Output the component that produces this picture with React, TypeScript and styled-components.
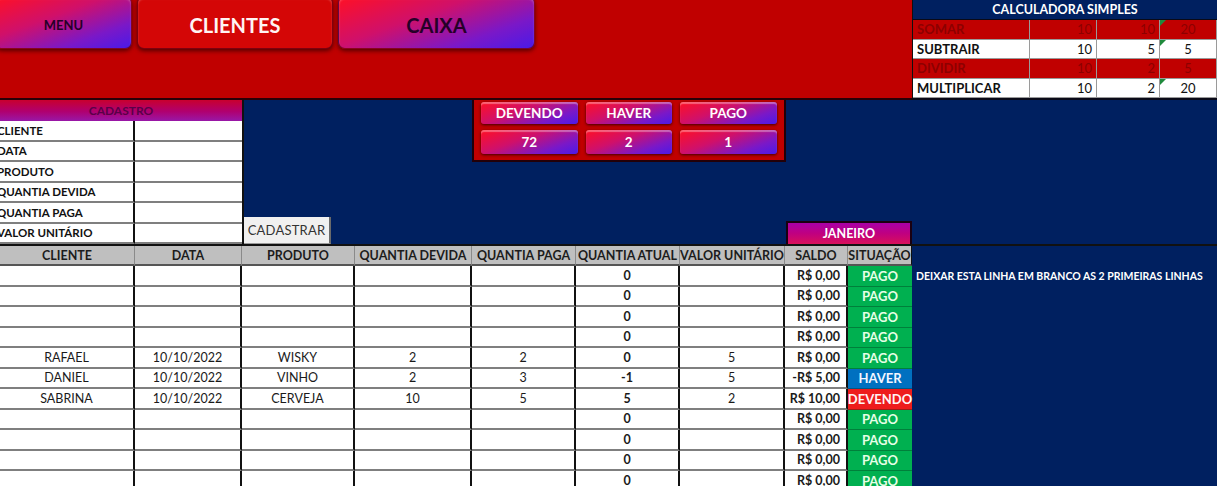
import React from "react";
import styled, { createGlobalStyle } from "styled-components";

const NAVY = "#002060";
const RED = "#c00000";
const GLOSS = "linear-gradient(160deg, #ff1024 0%, #d0106a 40%, #7a18c8 75%, #4a1ae8 100%)";

const GlobalStyle = createGlobalStyle`
  html, body {
    margin: 0;
    padding: 0;
    background: ${NAVY};
  }
  body {
    font-family: Lato, "Open Sans", "Liberation Sans", sans-serif;
  }
`;

const Sheet = styled.div`
  width: 1217px;
  height: 486px;
  overflow: hidden;
  background: ${NAVY};
  display: flex;
  flex-direction: column;
`;

/* ---------- top band ---------- */

const TopArea = styled.div`
  display: flex;
  height: 100px;
  flex-shrink: 0;
`;

const MenuBand = styled.div`
  width: 912px;
  box-sizing: border-box;
  background: ${RED};
  border-bottom: 2px solid #2a0008;
  display: flex;
  align-items: flex-start;
  gap: 5px;
`;

const NavButton = styled.div<{ $w: number; $active?: boolean; $size: number }>`
  width: ${(p) => p.$w}px;
  height: 53px;
  margin-top: -4px;
  box-sizing: border-box;
  border-radius: 7px;
  background: ${(p) => (p.$active ? "#d40606" : GLOSS)};
  border: 1px solid rgba(90, 0, 20, 0.7);
  box-shadow: inset 0 2px 2px rgba(255, 255, 255, 0.25), 0 2px 4px rgba(40, 0, 0, 0.7);
  display: flex;
  align-items: center;
  justify-content: center;
  padding-top: 4px;
  font-weight: 700;
  font-size: ${(p) => p.$size}px;
  color: ${(p) => (p.$active ? "#fff4f4" : "#260028")};
  &:first-child {
    margin-left: -5px;
  }
`;

const Calculator = styled.div`
  flex: 1;
  border-left: 1px solid #101010;
  border-bottom: 2px solid #0a0a18;
  box-sizing: border-box;
  display: flex;
  flex-direction: column;
`;

const CalcTitle = styled.div`
  height: 20px;
  background: ${NAVY};
  color: #ffffff;
  font-weight: 700;
  font-size: 12.5px;
  display: flex;
  align-items: center;
  justify-content: center;
  border-bottom: 1px solid #0a0a18;
  box-sizing: border-box;
`;

const CalcRow = styled.div<{ $tone: "red" | "white" }>`
  height: 19.5px;
  display: grid;
  grid-template-columns: 117px 67px 63px 1fr;
  background: ${(p) => (p.$tone === "red" ? RED : "#ffffff")};
  color: ${(p) => (p.$tone === "red" ? "#8c0000" : "#111111")};
  font-size: 13px;
`;

const CalcCell = styled.div<{ $align?: "left" | "right" | "center"; $bold?: boolean; $flag?: boolean }>`
  position: relative;
  display: flex;
  align-items: center;
  justify-content: ${(p) =>
    p.$align === "right" ? "flex-end" : p.$align === "center" ? "center" : "flex-start"};
  padding: 0 4px;
  font-weight: ${(p) => (p.$bold ? 700 : 400)};
  border-right: 1px solid #9a9a9a;
  border-bottom: 1px solid #9a9a9a;
  box-sizing: border-box;
  &::before {
    content: "";
    display: ${(p) => (p.$flag ? "block" : "none")};
    position: absolute;
    left: 0;
    top: 0;
    border-top: 6px solid #1f8a3c;
    border-right: 6px solid transparent;
  }
`;

/* ---------- middle strip ---------- */

const Middle = styled.div`
  display: flex;
  height: 144px;
  flex-shrink: 0;
`;

const Cadastro = styled.div`
  width: 242px;
  display: grid;
  grid-template-columns: 135px 107px;
  grid-template-rows: 21px repeat(6, 20.5px);
  border-right: 2px solid #111;
  box-sizing: content-box;
`;

const CadastroTitle = styled.div`
  grid-column: 1 / 3;
  background: linear-gradient(180deg, #c8002e 0%, #b00070 55%, #9818a8 100%);
  color: #5a0048;
  font-weight: 700;
  font-size: 12px;
  display: flex;
  align-items: center;
  justify-content: center;
`;

const FormLabel = styled.div`
  background: #ffffff;
  color: #111;
  font-weight: 700;
  font-size: 11.5px;
  display: flex;
  align-items: center;
  margin-left: -3px;
  border-right: 2px solid #111;
  border-bottom: 2px solid #7f7f7f;
  box-sizing: border-box;
  white-space: nowrap;
`;

const FormValue = styled.div`
  background: #ffffff;
  border-bottom: 2px solid #7f7f7f;
  box-sizing: border-box;
`;

const ButtonSlot = styled.div`
  width: 229px;
  display: flex;
  align-items: flex-end;
`;

const SaveButton = styled.div`
  width: 87px;
  height: 27px;
  box-sizing: border-box;
  background: #f0f0f0;
  border-right: 2px solid #6a6a6a;
  border-bottom: 1px solid #9a9a9a;
  color: #333;
  font-size: 13px;
  display: flex;
  align-items: center;
  justify-content: center;
  letter-spacing: 0.2px;
`;

const StatusBox = styled.div`
  width: 314px;
  height: 62px;
  box-sizing: border-box;
  background: ${RED};
  border: 2px solid #220008;
  border-top: none;
  display: grid;
  grid-template-columns: 97px 86px 97px;
  grid-template-rows: 22px 24px;
  column-gap: 8px;
  row-gap: 6px;
  padding: 2px 7px 0 7px;
`;

const StatusButton = styled.div`
  border-radius: 3px;
  background: ${GLOSS};
  box-shadow: inset 0 2px 1px rgba(255, 255, 255, 0.35), 0 1px 3px rgba(30, 0, 0, 0.8);
  color: #ffffff;
  font-weight: 700;
  font-size: 13.5px;
  display: flex;
  align-items: center;
  justify-content: center;
`;

const MonthSlot = styled.div`
  width: 127px;
  margin-left: auto;
  margin-right: 305px;
  display: flex;
  align-items: flex-end;
`;

const MonthTitle = styled.div`
  width: 100%;
  height: 23px;
  box-sizing: border-box;
  border: 2px solid #1a0010;
  border-bottom: none;
  background: linear-gradient(180deg, #a800a8 0%, #c00080 50%, #d8105a 100%);
  color: #ffffff;
  font-weight: 700;
  font-size: 12.5px;
  display: flex;
  align-items: center;
  justify-content: center;
`;

/* ---------- ledger ---------- */

const Ledger = styled.div`
  display: grid;
  grid-template-columns: 135px 107px 113px 117px 104px 104px 105px 63px 64px 1fr;
  grid-template-rows: 20px;
  grid-auto-rows: 20.5px;
  border-top: 2px solid #111;
`;

const HeadCell = styled.div<{ $last?: boolean }>`
  background: #bfbfbf;
  color: #1c1c1c;
  font-weight: 700;
  font-size: 12.5px;
  display: flex;
  align-items: center;
  justify-content: center;
  white-space: nowrap;
  overflow: hidden;
  border-right: 1px solid ${(p) => (p.$last ? "#111" : "#8a8a8a")};
  border-bottom: 2px solid #555;
  box-sizing: border-box;
`;

const Cell = styled.div<{ $bold?: boolean; $align?: "center" | "right" }>`
  background: #ffffff;
  color: #1a1a1a;
  font-size: 12.5px;
  font-weight: ${(p) => (p.$bold ? 700 : 400)};
  display: flex;
  align-items: center;
  justify-content: ${(p) => (p.$align === "right" ? "flex-end" : "center")};
  padding-right: ${(p) => (p.$align === "right" ? "6px" : "0")};
  border-right: 2px solid #111;
  border-bottom: 2px solid #7f7f7f;
  box-sizing: border-box;
  white-space: nowrap;
`;

type Status = "PAGO" | "HAVER" | "DEVENDO";

const statusColors: Record<Status, { bg: string; fg: string }> = {
  PAGO: { bg: "#00b050", fg: "#e6ffe6" },
  HAVER: { bg: "#0070c0", fg: "#f2f6ff" },
  DEVENDO: { bg: "#ee1c1c", fg: "#fff4f4" },
};

const StatusCell = styled.div<{ $status: Status }>`
  background: ${(p) => statusColors[p.$status].bg};
  color: ${(p) => statusColors[p.$status].fg};
  font-weight: 700;
  font-size: 13px;
  display: flex;
  align-items: center;
  justify-content: center;
  border-bottom: 1px solid rgba(0, 40, 20, 0.35);
  box-sizing: border-box;
  white-space: nowrap;
`;

const NoteCell = styled.div`
  color: #ffffff;
  font-weight: 700;
  font-size: 10.5px;
  display: flex;
  align-items: center;
  padding-left: 4px;
  white-space: nowrap;
`;

type Entry = {
  cliente: string;
  data: string;
  produto: string;
  devida: string;
  paga: string;
  atual: string;
  unitario: string;
  saldo: string;
  situacao: Status;
};

const blank = (saldo = "R$ 0,00"): Entry => ({
  cliente: "",
  data: "",
  produto: "",
  devida: "",
  paga: "",
  atual: "0",
  unitario: "",
  saldo,
  situacao: "PAGO",
});

const entries: Entry[] = [
  blank(),
  blank(),
  blank(),
  blank(),
  { cliente: "RAFAEL", data: "10/10/2022", produto: "WISKY", devida: "2", paga: "2", atual: "0", unitario: "5", saldo: "R$ 0,00", situacao: "PAGO" },
  { cliente: "DANIEL", data: "10/10/2022", produto: "VINHO", devida: "2", paga: "3", atual: "-1", unitario: "5", saldo: "-R$ 5,00", situacao: "HAVER" },
  { cliente: "SABRINA", data: "10/10/2022", produto: "CERVEJA", devida: "10", paga: "5", atual: "5", unitario: "2", saldo: "R$ 10,00", situacao: "DEVENDO" },
  blank(),
  blank(),
  blank(),
  blank(),
];

const headers = [
  "CLIENTE",
  "DATA",
  "PRODUTO",
  "QUANTIA DEVIDA",
  "QUANTIA PAGA",
  "QUANTIA ATUAL",
  "VALOR UNITÁRIO",
  "SALDO",
  "SITUAÇÃO",
];

const formFields = ["CLIENTE", "DATA", "PRODUTO", "QUANTIA DEVIDA", "QUANTIA PAGA", "VALOR UNITÁRIO"];

const calcRows = [
  { op: "SOMAR", a: "10", b: "10", r: "20", tone: "red" as const, flag: true },
  { op: "SUBTRAIR", a: "10", b: "5", r: "5", tone: "white" as const, flag: true },
  { op: "DIVIDIR", a: "10", b: "2", r: "5", tone: "red" as const, flag: false },
  { op: "MULTIPLICAR", a: "10", b: "2", r: "20", tone: "white" as const, flag: true },
];

export default function App() {
  return (
    <>
      <GlobalStyle />
      <Sheet>
        <TopArea>
          <MenuBand>
            <NavButton $w={137} $size={13}>MENU</NavButton>
            <NavButton $w={196} $size={20} $active>CLIENTES</NavButton>
            <NavButton $w={197} $size={20}>CAIXA</NavButton>
          </MenuBand>
          <Calculator>
            <CalcTitle>CALCULADORA SIMPLES</CalcTitle>
            {calcRows.map((row) => (
              <CalcRow key={row.op} $tone={row.tone}>
                <CalcCell $bold>{row.op}</CalcCell>
                <CalcCell $align="right">{row.a}</CalcCell>
                <CalcCell $align="right">{row.b}</CalcCell>
                <CalcCell $align="center" $flag={row.flag}>{row.r}</CalcCell>
              </CalcRow>
            ))}
          </Calculator>
        </TopArea>

        <Middle>
          <Cadastro>
            <CadastroTitle>CADASTRO</CadastroTitle>
            {formFields.map((f) => (
              <React.Fragment key={f}>
                <FormLabel>{f}</FormLabel>
                <FormValue />
              </React.Fragment>
            ))}
          </Cadastro>
          <ButtonSlot>
            <SaveButton>CADASTRAR</SaveButton>
          </ButtonSlot>
          <StatusBox>
            <StatusButton>DEVENDO</StatusButton>
            <StatusButton>HAVER</StatusButton>
            <StatusButton>PAGO</StatusButton>
            <StatusButton>72</StatusButton>
            <StatusButton>2</StatusButton>
            <StatusButton>1</StatusButton>
          </StatusBox>
          <MonthSlot>
            <MonthTitle>JANEIRO</MonthTitle>
          </MonthSlot>
        </Middle>

        <Ledger>
          {headers.map((h, i) => (
            <HeadCell key={h} $last={i === headers.length - 1}>
              {h}
            </HeadCell>
          ))}
          <div />
          {entries.map((e, i) => (
            <React.Fragment key={i}>
              <Cell>{e.cliente}</Cell>
              <Cell>{e.data}</Cell>
              <Cell>{e.produto}</Cell>
              <Cell>{e.devida}</Cell>
              <Cell>{e.paga}</Cell>
              <Cell $bold>{e.atual}</Cell>
              <Cell>{e.unitario}</Cell>
              <Cell $bold $align="right">{e.saldo}</Cell>
              <StatusCell $status={e.situacao}>{e.situacao}</StatusCell>
              {i === 0 ? <NoteCell>DEIXAR ESTA LINHA EM BRANCO AS 2 PRIMEIRAS LINHAS</NoteCell> : <div />}
            </React.Fragment>
          ))}
        </Ledger>
      </Sheet>
    </>
  );
}
